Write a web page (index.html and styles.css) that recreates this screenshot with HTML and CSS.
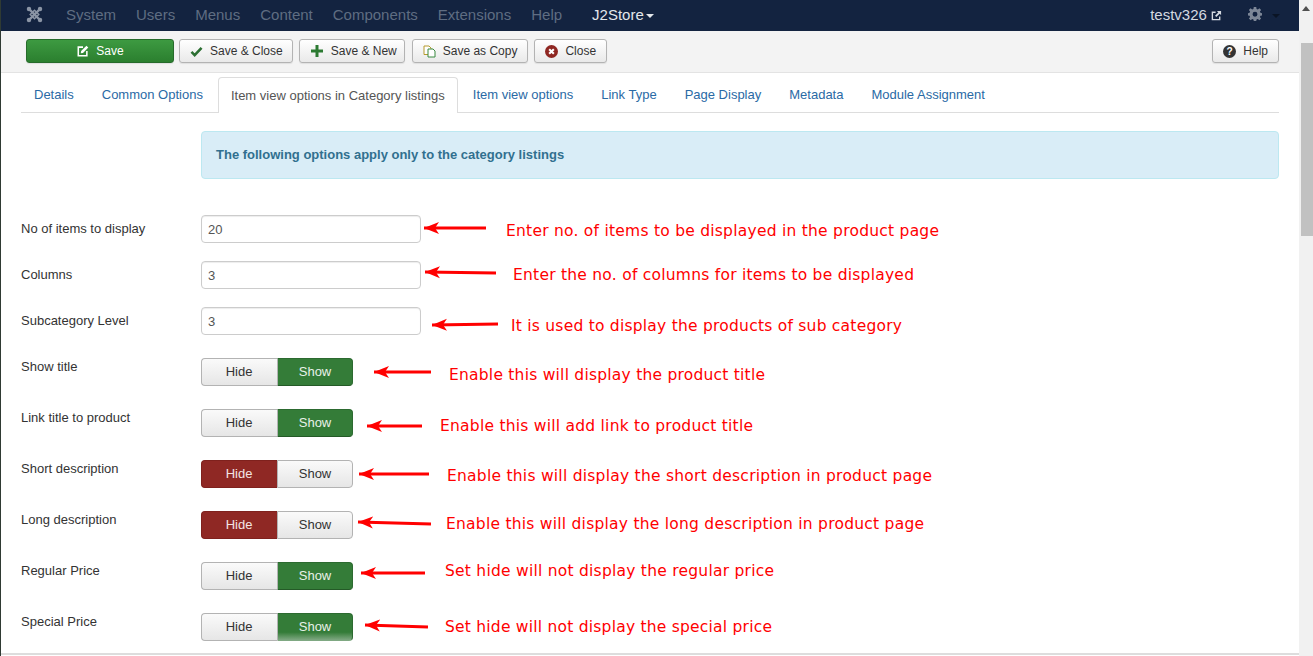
FILE: index.html
```html
<!DOCTYPE html>
<html lang="en">
<head>
    <meta charset="UTF-8">
    <title>Menu Item - J2Store</title>
    <link rel="stylesheet" href="styles.css">
</head>
<body>
    <div class="page">
        <nav class="navbar">
            <svg class="logo" viewBox="0 0 20 20" width="17" height="17">
                <g fill="none" stroke="#8b95a5" stroke-width="2.6">
                    <path d="M4 4L16 16M16 4L4 16"/>
                    <path d="M10 5L15 10L10 15L5 10Z" stroke-width="1.8"/>
                </g>
                <g fill="#8b95a5">
                    <circle cx="3.5" cy="3.5" r="2.6"/>
                    <circle cx="16.5" cy="3.5" r="2.6"/>
                    <circle cx="3.5" cy="16.5" r="2.6"/>
                    <circle cx="16.5" cy="16.5" r="2.6"/>
                </g>
            </svg>
            <ul class="menu">
                <li>System</li>
                <li>Users</li>
                <li>Menus</li>
                <li>Content</li>
                <li>Components</li>
                <li>Extensions</li>
                <li>Help</li>
            </ul>
            <span class="menu-j2">J2Store<i class="caret"></i></span>
            <span class="site-link">testv326
                <svg viewBox="0 0 12 12" width="11" height="11">
                    <path d="M5 2.5H1.5V10.5H9.5V7" fill="none" stroke="#d5dae1" stroke-width="1.5"/>
                    <path d="M6.5 1H11V5.5L9.4 4L5.8 7.6L4.4 6.2L8 2.6Z" fill="#d5dae1"/>
                </svg>
            </span>
            <svg class="gear" viewBox="0 0 16 16" width="14" height="14">
                <path fill="#7d8797" fill-rule="evenodd" d="M6.6 0H9.4L9.8 2.2L11.2 2.8L13.1 1.5L15 3.4L13.6 5.2L14.2 6.6L16 7V9.6L14.2 10L13.6 11.4L14.9 13.2L13 15.1L11.2 13.7L9.8 14.3L9.4 16H6.6L6.2 14.3L4.8 13.7L3 15.1L1.1 13.2L2.4 11.4L1.8 10L0 9.6V7L1.8 6.6L2.4 5.2L1 3.4L2.9 1.5L4.8 2.8L6.2 2.2ZM8 5.4A2.8 2.8 0 1 0 8 11A2.8 2.8 0 1 0 8 5.4Z"/>
            </svg>
            <i class="caret caret-dim"></i>
        </nav>

        <div class="toolbar">
            <button class="btn btn-save">
                <svg viewBox="0 0 14 14" width="12" height="12">
                    <path d="M7 2.5H1.5V12.5H11.5V7" fill="none" stroke="#fff" stroke-width="1.8"/>
                    <path d="M11 0.8L13.2 3L7 9.2L4.4 9.6L4.8 7Z" fill="#fff"/>
                </svg>
                Save
            </button>
            <button class="btn">
                <svg viewBox="0 0 14 12" width="13" height="11">
                    <path d="M1.5 6.5L5 10L12.5 2" fill="none" stroke="#2c6f32" stroke-width="2.8"/>
                </svg>
                Save &amp; Close
            </button>
            <button class="btn btn-new">
                <svg viewBox="0 0 12 12" width="12" height="12">
                    <path d="M4.5 0H7.5V4.5H12V7.5H7.5V12H4.5V7.5H0V4.5H4.5Z" fill="#2c7a32"/>
                </svg>
                Save &amp; New
            </button>
            <button class="btn btn-wide">
                <svg viewBox="0 0 13 13" width="13" height="13">
                    <path d="M1 1H6L8 3V9.5H1Z" fill="#fff" stroke="#b59a2e"/>
                    <path d="M5 4H10L12 6V12H5Z" fill="#fff" stroke="#3b8a40"/>
                </svg>
                Save as Copy
            </button>
            <button class="btn btn-wide">
                <svg viewBox="0 0 14 14" width="13" height="13">
                    <circle cx="7" cy="7" r="7" fill="#8f2722"/>
                    <path d="M4.5 4.5L9.5 9.5M9.5 4.5L4.5 9.5" stroke="#fff" stroke-width="2.2"/>
                </svg>
                Close
            </button>
            <button class="btn btn-wide btn-help">
                <svg viewBox="0 0 14 14" width="13" height="13">
                    <circle cx="7" cy="7" r="7" fill="#333"/>
                    <text x="7" y="10.8" class="help-mark">?</text>
                </svg>
                Help
            </button>
        </div>

        <div class="content">
            <ul class="tabs">
                <li>Details</li>
                <li>Common Options</li>
                <li class="active">Item view options in Category listings</li>
                <li>Item view options</li>
                <li>Link Type</li>
                <li>Page Display</li>
                <li>Metadata</li>
                <li>Module Assignment</li>
            </ul>

            <div class="alert">The following options apply only to the category listings</div>

            <form class="options">
                <div class="row">
                    <label>No of items to display</label>
                    <input type="text" value="20">
                </div>
                <div class="row">
                    <label>Columns</label>
                    <input type="text" value="3">
                </div>
                <div class="row">
                    <label>Subcategory Level</label>
                    <input type="text" value="3">
                </div>
                <div class="row">
                    <label>Show title</label>
                    <div class="toggle"><span>Hide</span><span class="on">Show</span></div>
                </div>
                <div class="row">
                    <label>Link title to product</label>
                    <div class="toggle"><span>Hide</span><span class="on">Show</span></div>
                </div>
                <div class="row">
                    <label>Short description</label>
                    <div class="toggle"><span class="off">Hide</span><span>Show</span></div>
                </div>
                <div class="row">
                    <label>Long description</label>
                    <div class="toggle"><span class="off">Hide</span><span>Show</span></div>
                </div>
                <div class="row">
                    <label>Regular Price</label>
                    <div class="toggle"><span>Hide</span><span class="on">Show</span></div>
                </div>
                <div class="row">
                    <label>Special Price</label>
                    <div class="toggle"><span>Hide</span><span class="on on-fade">Show</span></div>
                </div>
            </form>
            <div class="footer-line"></div>
        </div>
    </div>

    <div class="scrollbar">
        <div class="scroll-up"><i></i></div>
        <div class="scroll-thumb"></div>
    </div>

    <!-- red notes drawn on top of the screenshot -->
    <svg class="notes" width="1313" height="656" viewBox="0 0 1313 656">
        <defs>
            <marker id="head" markerUnits="userSpaceOnUse" markerWidth="16" markerHeight="14" refX="15" refY="7" orient="auto">
                <path d="M0 1L15 7L0 13L4 7Z" fill="#f00"/>
            </marker>
        </defs>
        <g class="arrows">
            <line x1="486" y1="228" x2="424" y2="228" marker-end="url(#head)"/>
            <line x1="496" y1="273" x2="425" y2="272" marker-end="url(#head)"/>
            <line x1="498" y1="324" x2="432" y2="325" marker-end="url(#head)"/>
            <line x1="431" y1="372" x2="374" y2="372" marker-end="url(#head)"/>
            <line x1="422" y1="426" x2="367" y2="426" marker-end="url(#head)"/>
            <line x1="429" y1="474" x2="359" y2="474" marker-end="url(#head)"/>
            <line x1="431" y1="524" x2="358" y2="522" marker-end="url(#head)"/>
            <line x1="425" y1="573" x2="361" y2="573" marker-end="url(#head)"/>
            <line x1="428" y1="627" x2="365" y2="625" marker-end="url(#head)"/>
        </g>
        <g class="note-text">
            <text x="506" y="236" textLength="433">Enter no. of items to be displayed in the product page</text>
            <text x="513" y="280" textLength="401">Enter the no. of columns for items to be displayed</text>
            <text x="511" y="331" textLength="391">It is used to display the products of sub category</text>
            <text x="449" y="380" textLength="316">Enable this will display the product title</text>
            <text x="440" y="431" textLength="313">Enable this will add link to product title</text>
            <text x="447" y="481" textLength="485">Enable this will display the short description in product page</text>
            <text x="446" y="529" textLength="478">Enable this will display the long description in product page</text>
            <text x="445" y="576" textLength="329">Set hide will not display the regular price</text>
            <text x="445" y="632" textLength="327">Set hide will not display the special price</text>
        </g>
    </svg>
</body>
</html>
```

FILE: styles.css
```css
html, body {
    margin: 0;
    height: 100%;
    overflow: hidden;
}
body {
    display: flex;
    position: relative;
    height: 656px;
    font-family: "Liberation Sans", Arial, sans-serif;
    font-size: 13px;
    color: #333;
    background: #fff;
    border-left: 1px solid #2f3a33;
    box-sizing: border-box;
}
.page {
    flex: 1;
    min-width: 0;
}

/* top bar */
.navbar {
    display: flex;
    align-items: center;
    height: 31px;
    box-sizing: border-box;
    padding-bottom: 2px;
    background: #132340;
    color: #5f6d82;
    font-size: 15px;
}
.logo {
    margin-left: 25px;
}
.menu {
    display: flex;
    gap: 20px;
    list-style: none;
    margin: 0 0 0 23px;
    padding: 0;
}
.menu-j2 {
    margin-left: 30px;
    color: #e4e7eb;
}
.caret {
    display: inline-block;
    margin-left: 2px;
    vertical-align: 2px;
    border-top: 4px solid #e4e7eb;
    border-left: 4px solid transparent;
    border-right: 4px solid transparent;
}
.caret-dim {
    margin: 3px 19px 0 10px;
    border-top-color: #0a1425;
}
.site-link {
    margin-left: auto;
    color: #d5dae1;
}
.site-link svg {
    vertical-align: -1px;
}
.gear {
    margin-left: 26px;
    margin-bottom: 1px;
}

/* toolbar */
.toolbar {
    display: flex;
    align-items: flex-start;
    gap: 6px;
    box-sizing: border-box;
    height: 42px;
    padding: 8px 20px 0 25px;
    background: #f3f3f3;
    border-bottom: 1px solid #e3e3e3;
}
.btn {
    display: flex;
    align-items: center;
    justify-content: center;
    gap: 7px;
    height: 24px;
    padding: 0 9px 0 10px;
    font-family: inherit;
    font-size: 12px;
    color: #333;
    background: linear-gradient(#fff, #e9e9e9);
    border: 1px solid #b3b3b3;
    border-radius: 3px;
    box-shadow: 0 1px 1px rgba(0, 0, 0, 0.08);
}
.btn-save {
    width: 148px;
    margin-right: -1px;
    color: #fff;
    background: linear-gradient(#3d9a41, #2b7f2f);
    border-color: #276b2b;
}
.btn-new {
    gap: 8px;
    padding: 0 7px 0 11px;
    margin-right: 1px;
}
.btn-wide {
    padding-right: 10px;
}
.btn-help {
    margin-left: auto;
}
.help-mark {
    font-size: 11px;
    font-weight: bold;
    fill: #fff;
    text-anchor: middle;
}

/* tabs */
.content {
    padding: 4px 20px 0;
}
.tabs {
    display: flex;
    gap: 2px;
    list-style: none;
    margin: 0;
    padding: 0;
    height: 35px;
    border-bottom: 1px solid #ddd;
    color: #2a6aa5;
}
.tabs li {
    padding: 0 13px;
    line-height: 35px;
}
.tabs .active {
    height: 35px;
    padding: 0 12px;
    color: #555;
    background: #fff;
    border: 1px solid #ddd;
    border-bottom: 0;
    border-radius: 4px 4px 0 0;
}

.alert {
    margin: 18px 0 36px 180px;
    padding: 0 14px;
    height: 46px;
    line-height: 46px;
    font-weight: bold;
    color: #31708f;
    background: #d9edf7;
    border: 1px solid #bce8f1;
    border-radius: 4px;
}

/* form rows */
.row {
    display: flex;
    align-items: flex-start;
    margin-bottom: 18px;
}
.row:last-child {
    margin-bottom: 12px;
}
.row label {
    width: 180px;
    flex: none;
    line-height: 28px;
}
.row input {
    width: 220px;
    height: 28px;
    box-sizing: border-box;
    padding: 0 6px;
    font-family: inherit;
    font-size: 13px;
    color: #555;
    border: 1px solid #ccc;
    border-radius: 4px;
    box-shadow: inset 0 1px 1px rgba(0, 0, 0, 0.075);
}
.toggle {
    display: flex;
    margin-top: 5px;
}
.toggle span {
    width: 76px;
    height: 28px;
    box-sizing: border-box;
    line-height: 26px;
    text-align: center;
    background: linear-gradient(#fafafa, #e6e6e6);
    border: 1px solid #b3b3b3;
}
.toggle span:first-child {
    padding-right: 1px;
    border-right: 0;
    border-radius: 4px 0 0 4px;
}
.toggle span:last-child {
    border-left: 1px solid #b3b3b3;
    border-radius: 0 4px 4px 0;
}
.toggle .on {
    color: #e8f1e8;
    background: #347c38;
    border-color: #2c6a30;
    border-bottom-color: #245a27;
}
.toggle .on-fade {
    background: linear-gradient(#347c38 70%, #7fa882);
    border-bottom-color: #7fa882;
}
.toggle .off {
    color: #f3e4e3;
    background: #8f2824;
    border-color: #7f211d;
}
.footer-line {
    margin: 0 -20px;
    border-top: 2px solid #ddd;
}

/* fake scrollbar */
.scrollbar {
    flex: none;
    width: 14px;
    background: #f1f1f1;
}
.scroll-up {
    display: flex;
    justify-content: center;
    padding-top: 6px;
    height: 37px;
}
.scroll-up i {
    height: 0;
    border-bottom: 5px solid #505050;
    border-left: 4px solid transparent;
    border-right: 4px solid transparent;
}
.scroll-thumb {
    height: 193px;
    margin-left: 2px;
    background: #c1c1c1;
}

/* annotation layer */
.notes {
    position: absolute;
    top: 0;
    left: -1px;
    pointer-events: none;
}
.arrows line {
    stroke: #f00;
    stroke-width: 3;
}
.note-text {
    font-family: "DejaVu Sans", sans-serif;
    font-size: 15.5px;
    fill: #f00;
}
```
